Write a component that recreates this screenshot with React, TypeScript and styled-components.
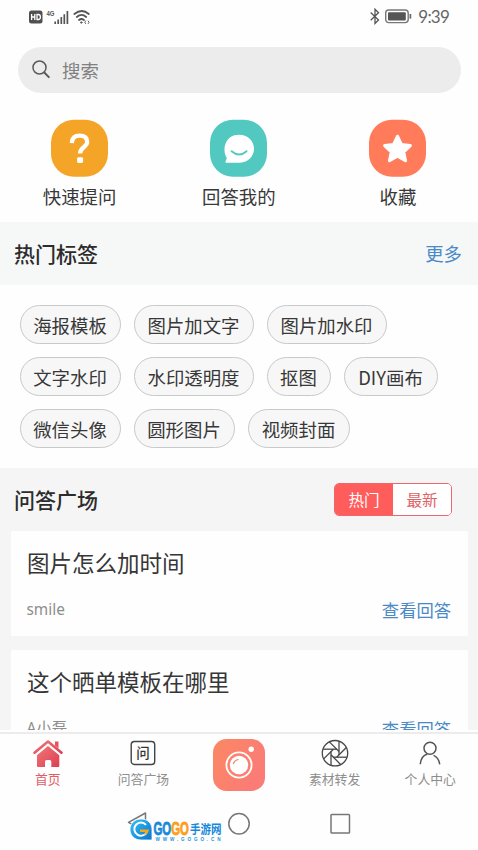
import React from "react";
import styled, { createGlobalStyle } from "styled-components";

const GlobalStyle = createGlobalStyle`
  * { box-sizing: border-box; }
  body {
    margin: 0;
    background: #fefefe;
    font-family: "Noto Sans", "Noto Sans CJK SC", sans-serif;
    color: #383838;
  }
`;

const Screen = styled.div`
  width: 478px;
  height: 850px;
  display: flex;
  flex-direction: column;
  overflow: hidden;
  background: #fefefe;
`;

const StatusBar = styled.header`
  height: 47px;
  flex: none;
  padding: 0 29px;
  display: flex;
  justify-content: space-between;
  align-items: flex-start;
`;

const StatusGroup = styled.div<{ $gap: number }>`
  display: flex;
  height: 33px;
  align-items: center;
  gap: ${(p) => p.$gap}px;
`;

const Clock = styled.span`
  font: 400 17px/33px Lato, sans-serif;
  color: #666;
  letter-spacing: -0.8px;
  margin-left: 1px;
`;

const SearchBox = styled.div`
  flex: none;
  width: 443px;
  height: 46px;
  margin-left: 18px;
  padding-left: 14px;
  border-radius: 23px;
  background: #ececed;
  display: flex;
  align-items: center;
  gap: 12px;
  font: 18.4px/28px "Noto Sans CJK SC", sans-serif;
  color: #808080;
`;

const Shortcuts = styled.nav`
  flex: none;
  height: 129px;
  padding-top: 26.3px;
  display: grid;
  grid-template-columns: repeat(3, 159.2px);
`;

const Shortcut = styled.div`
  display: flex;
  flex-direction: column;
  align-items: center;
  font: 18.4px/28px "Noto Sans CJK SC", sans-serif;
  gap: 5px;
`;

const SectionBar = styled.div`
  flex: none;
  height: 63px;
  padding: 0 16px 2px 14px;
  display: flex;
  align-items: center;
  justify-content: space-between;
  background: #f6f7f7;
`;

const SectionTitle = styled.h2`
  margin: 0;
  font: 500 21px/30px "Noto Sans CJK SC", sans-serif;
  color: #2c2c2c;
`;

const BlueLink = styled.span<{ $size: number }>`
  font: ${(p) => p.$size}px/26px "Noto Sans CJK SC", sans-serif;
  color: #4b8ac6;
`;

const TagArea = styled.div`
  flex: none;
  height: 183px;
  padding: 20px 0 0 20px;
  display: flex;
  flex-direction: column;
  gap: 13px;
`;

const TagRow = styled.div`
  display: flex;
  gap: 13px;
`;

const Tag = styled.span<{ $width: number }>`
  width: ${(p) => p.$width}px;
  height: 39px;
  border: 1px solid #c8c9c9;
  border-radius: 20px;
  background: #f7f7f7;
  display: flex;
  align-items: center;
  justify-content: center;
  padding: 0 1px 0 0;
  white-space: nowrap;
  font: 18.4px/28px "Noto Sans CJK SC", sans-serif;
`;

const Feed = styled.section`
  height: 262px;
  flex: none;
  overflow: hidden;
  background: #f5f5f5;
`;

const FeedHeader = styled.div`
  height: 63px;
  padding: 0 26px 1px 14px;
  display: flex;
  justify-content: space-between;
  align-items: center;
`;

const Segmented = styled.div`
  width: 118px;
  height: 33px;
  border: 1.5px solid #e8686b;
  border-radius: 5px;
  overflow: hidden;
  display: flex;
`;

const Segment = styled.span<{ $active?: boolean }>`
  flex: 1;
  text-align: center;
  font: 15.6px/30px "Noto Sans CJK SC", sans-serif;
  background: ${(p) => (p.$active ? "#ff5c5c" : "#fff")};
  color: ${(p) => (p.$active ? "#fff" : "#e06266")};
`;

const Card = styled.article`
  width: 457px;
  height: 105px;
  margin: 0 0 14px 11px;
  padding: 14px 17px 0 16px;
  border-radius: 2px;
  background: #fefefe;
`;

const Question = styled.h3`
  margin: 0;
  font: 400 22.5px/34px "Noto Sans CJK SC", sans-serif;
  color: #363636;
`;

const CardFooter = styled.div`
  margin-top: 18px;
  display: flex;
  justify-content: space-between;
  align-items: center;
`;

const Author = styled.span`
  margin-left: -0.5px;
  font: 15.4px/24px "Noto Sans", "Noto Sans CJK SC", sans-serif;
  color: #8d8d8d;
`;

const TabBar = styled.nav`
  flex: none;
  height: 69px;
  margin-top: 2px;
  border-top: 2px solid #ececec;
  display: grid;
  grid-template-columns: repeat(5, 95.6px);
`;

const Tab = styled.div<{ $active?: boolean; $top?: number }>`
  display: flex;
  flex-direction: column;
  align-items: center;
  padding-top: ${(p) => p.$top ?? 4}px;
  font: 12.8px/20px "Noto Sans CJK SC", sans-serif;
  color: ${(p) => (p.$active ? "#e45c68" : "#8e8e8e")};
  gap: 1px;
`;

const SystemBar = styled.footer`
  position: relative;
  flex: none;
  height: 49px;
  display: flex;
  padding: 9px 0 0 126px;
`;

const SystemKey = styled.svg<{ $gap?: number }>`
  width: 24px;
  height: 26px;
  flex: none;
  margin-left: ${(p) => p.$gap ?? 0}px;
`;

const Watermark = styled.svg`
  position: absolute;
  left: 128px;
  top: 15px;
  overflow: visible;
`;

const HdIcon = () => (
  <svg width="14" height="14" viewBox="0 0 14 14">
    <rect x="0" y="0.5" width="13.5" height="13" rx="2.5" fill="#505050" />
    <g stroke="#fff" strokeWidth="1.3" fill="none">
      <path d="M2.6 4v6M5.8 4v6M2.6 7h3.2" />
      <path d="M8 4.5h1.400q2 0 2 2.500t-2 2.500H8z" />
    </g>
  </svg>
);

const SignalIcon = () => (
  <svg width="24" height="18" viewBox="0 0 24 18">
    <text x="0.5" y="7.600" fontSize="7.500" fontWeight="700" textLength="8" lengthAdjust="spacingAndGlyphs" fontFamily="Liberation Sans" fill="#555">4G</text>
    <path d="M9.200 13.600V16M12.200 11.500V16M15.300 9V16M18.300 6.300V16M21.400 3V16" stroke="#555" strokeWidth="1.700" />
  </svg>
);

const WifiIcon = () => (
  <svg width="18" height="18" viewBox="0 0 18 18" fill="none" stroke="#555" strokeWidth="1.700" strokeLinecap="round">
    <path d="M1.300 6Q9 0 15.800 6M3.800 9q4.700-4.200 9.400 0M6 12q2.500-2 5 0" />
    <circle cx="8.300" cy="14.500" r=".8" fill="#555" strokeWidth=".7" />
    <path d="m12.600 13-.8 1.300.8 1.300M15.200 13l.8 1.300-.8 1.300" strokeWidth=".9" />
  </svg>
);

const BluetoothIcon = () => (
  <svg width="10" height="17" viewBox="0 0 10 17" fill="none" stroke="#555" strokeWidth="1.300">
    <path d="M.7 4.500 8.500 12 5 15.500V1.200l3.500 3.500L.7 12.300" />
  </svg>
);

const BatteryIcon = () => (
  <svg width="27" height="15" viewBox="0 0 27 15">
    <rect x=".7" y="1" width="22.500" height="12.600" rx="3" fill="none" stroke="#777" strokeWidth="1.400" />
    <rect x="3" y="3.200" width="17.800" height="8.200" rx="1" fill="#555" />
    <path d="M25.400 5v4.600" stroke="#666" strokeWidth="1.700" />
  </svg>
);

const SearchIcon = () => (
  <svg width="18" height="20" viewBox="0 0 18 20" fill="none" stroke="#5b5b5b">
    <circle cx="7.500" cy="7.500" r="6.500" strokeWidth="1.500" />
    <path d="m12.300 12.500 4.500 4.600" strokeWidth="2" strokeLinecap="round" />
  </svg>
);

const Squircle = ({ color, children }: { color: string; children: React.ReactNode }) => (
  <svg width="57" height="58" viewBox="0 -0.7 57 58">
    <rect width="57" height="57" rx="23" fill={color} />
    {children}
  </svg>
);

const HomeIcon = () => (
  <svg width="32" height="30" viewBox="0 0 32 30">
    <defs>
      <linearGradient id="home" x2="1" y2="1">
        <stop stopColor="#f37676" />
        <stop offset="1" stopColor="#dc3f53" />
      </linearGradient>
    </defs>
    <path d="M2.500 14.700 16 3.500l13.500 11.200" fill="none" stroke="url(#home)" strokeWidth="2.600" strokeLinecap="round" strokeLinejoin="round" />
    <path d="M23 3.500h3.500v7L23 7.500z" fill="#e4525f" />
    <path d="m16 8 11.300 9.300V28q0 1-1 1h-7v-5.500q0-1.500-1.500-1.500h-3.300q-1.500 0-1.500 1.500V29H6q-1 0-1-1V17.300z" fill="url(#home)" />
  </svg>
);

const AskIcon = () => (
  <svg width="26" height="30" viewBox="0 0 26 30">
    <rect x="1.200" y="3.500" width="23.500" height="23" rx="3.200" fill="none" stroke="#444" strokeWidth="1.400" />
    <text x="13" y="20" textAnchor="middle" fontSize="13.500" fontWeight="500" fontFamily="Noto Sans CJK SC" fill="#333">问</text>
  </svg>
);

const blades = Array.from({ length: 8 }, (_, i) => i * 45);

const ApertureIcon = () => (
  <svg width="28" height="30" viewBox="0 0 28 30" fill="none" stroke="#484848" strokeWidth="1.300">
    <circle cx="14" cy="15.200" r="12.700" />
    {blades.map((angle) => (
      <path key={angle} d="M15.700 11.200H2" transform={`rotate(${angle} 14 15.200)`} />
    ))}
  </svg>
);

const PersonIcon = () => (
  <svg width="26" height="30" viewBox="0 0 26 30" fill="none" stroke="#555" strokeWidth="1.500">
    <circle cx="13" cy="10.200" r="6" />
    <path d="M3.300 26.300C3.800 19.800 7 17 10.200 16.200M16.600 17.400c3.500 1.500 5.500 4.600 6.100 8.900" />
  </svg>
);

const CameraButton = () => (
  <svg width="52" height="52" viewBox="0 0 52 52">
    <defs>
      <linearGradient id="camera" x2="1" y2=".6">
        <stop stopColor="#fb8863" />
        <stop offset="1" stopColor="#fb7b77" />
      </linearGradient>
    </defs>
    <rect width="52" height="52" rx="13.500" fill="url(#camera)" />
    <circle cx="26" cy="26" r="12.600" fill="none" stroke="#fff" strokeWidth="1.800" />
    <circle cx="26" cy="26" r="9.200" fill="#fff" />
    <path d="M20.400 24.700q1.200-3.500 4.700-4.200" fill="none" stroke="#e98b78" strokeWidth="1.200" strokeLinecap="round" />
    <circle cx="38.200" cy="10.200" r="2.700" fill="#fff" />
  </svg>
);

const tagRows: [string, number][][] = [
  [["海报模板", 101], ["图片加文字", 120], ["图片加水印", 120]],
  [["文字水印", 101], ["水印透明度", 120], ["抠图", 64], ["DIY画布", 94]],
  [["微信头像", 101], ["圆形图片", 101], ["视频封面", 102]],
];

const questions = [
  { title: "图片怎么加时间", author: "smile" },
  { title: "这个晒单模板在哪里", author: "A小磊" },
];

export default function App() {
  return (
    <>
      <GlobalStyle />
      <Screen>
        <StatusBar>
          <StatusGroup $gap={3}>
            <HdIcon />
            <SignalIcon />
            <WifiIcon />
          </StatusGroup>
          <StatusGroup $gap={5}>
            <BluetoothIcon />
            <BatteryIcon />
            <Clock>9:39</Clock>
          </StatusGroup>
        </StatusBar>

        <SearchBox>
          <SearchIcon />
          搜索
        </SearchBox>

        <Shortcuts>
          <Shortcut>
            <Squircle color="#f4a527">
              <path d="M20.800 23.400Q21.200 16 28.700 16t7.500 6.400c0 5-7.200 5-7.200 11.500" fill="none" stroke="#fff" strokeWidth="4.300" strokeLinejoin="round" />
              <rect x="26.100" y="37.500" width="6" height="5.800" rx="1.400" fill="#fff" />
            </Squircle>
            快速提问
          </Shortcut>
          <Shortcut>
            <Squircle color="#51c9c1">
              <path d="M29 15c8.500 0 15 6 15 14s-6.500 14-15 14H16.200q-1.400 0-.6-1.400l1.200-3.400C11.500 29 15.500 15 29 15Z" fill="#fff" />
              <path d="M21.600 31.500q7.500 6.500 15 0" fill="none" stroke="#51c9c1" strokeWidth="1.800" strokeLinecap="round" />
            </Squircle>
            回答我的
          </Shortcut>
          <Shortcut>
            <Squircle color="#ff7b59">
              <path d="m28.500 16.500 3.900 8.200 9 1.200-6.600 6.200 1.700 8.900-8-4.400-8 4.400 1.700-8.900-6.600-6.200 9-1.200z" fill="#fff" stroke="#fff" strokeWidth="3" strokeLinejoin="round" />
            </Squircle>
            收藏
          </Shortcut>
        </Shortcuts>

        <SectionBar>
          <SectionTitle>热门标签</SectionTitle>
          <BlueLink $size={18.4}>更多</BlueLink>
        </SectionBar>

        <TagArea>
          {tagRows.map((row, i) => (
            <TagRow key={i}>
              {row.map(([label, width]) => (
                <Tag key={label} $width={width}>{label}</Tag>
              ))}
            </TagRow>
          ))}
        </TagArea>

        <Feed>
          <FeedHeader>
            <SectionTitle>问答广场</SectionTitle>
            <Segmented>
              <Segment $active>热门</Segment>
              <Segment>最新</Segment>
            </Segmented>
          </FeedHeader>
          {questions.map((q) => (
            <Card key={q.title}>
              <Question>{q.title}</Question>
              <CardFooter>
                <Author>{q.author}</Author>
                <BlueLink $size={17.3}>查看回答</BlueLink>
              </CardFooter>
            </Card>
          ))}
        </Feed>

        <TabBar>
          <Tab $active><HomeIcon />首页</Tab>
          <Tab><AskIcon />问答广场</Tab>
          <Tab $top={5}><CameraButton /></Tab>
          <Tab><ApertureIcon />素材转发</Tab>
          <Tab><PersonIcon />个人中心</Tab>
        </TabBar>

        <SystemBar>
          <SystemKey viewBox="0 0 24 26" fill="none" stroke="#777" strokeWidth="1.500">
            <path d="M19.500 3v18.500L2.500 12.300z" strokeLinejoin="round" />
          </SystemKey>
          <SystemKey $gap={77} viewBox="0 0 24 26" fill="none" stroke="#777" strokeWidth="1.500">
            <circle cx="12" cy="13.700" r="10.200" />
          </SystemKey>
          <SystemKey $gap={77} viewBox="0 0 24 26" fill="none" stroke="#777" strokeWidth="1.500">
            <rect x="3" y="4.500" width="18.500" height="18.500" rx=".8" />
          </SystemKey>
          <Watermark width="96" height="28" viewBox="0 0 96 28">
            <defs>
              <linearGradient id="mark" x2="1" y2="1">
                <stop stopColor="#35c1f6" />
                <stop offset="1" stopColor="#0875d0" />
              </linearGradient>
            </defs>
            <path d="M13 3c7 0 11 4.500 11 10.500V24H13C6.500 24 2 19.500 2 13.500S6.500 3 13 3Z" fill="url(#mark)" stroke="#fff" strokeWidth=".8" />
            <path d="M18 8.800a6.600 6.600 0 1 0 1 7" fill="none" stroke="#fff" strokeWidth="2" />
            <path d="M12 13.500h9q-.5 5-6 5.500 3-1.500 2.500-3H12z" fill="#f9a51a" />
            <text x="25.500" y="18.500" textLength="35.500" lengthAdjust="spacingAndGlyphs" fontFamily="Liberation Sans" fontWeight="700" fontSize="18" strokeWidth=".8">
              <tspan fill="#1689da" stroke="#1689da">GO</tspan><tspan fill="#ff9d16" stroke="#ff9d16">GO</tspan>
            </text>
            <text x="62" y="17.800" textLength="31.500" lengthAdjust="spacingAndGlyphs" fontFamily="Noto Sans CJK SC" fontWeight="700" fontSize="12.500" fill="#1689da">手游网</text>
            <text x="27.500" y="24.800" textLength="65" fontFamily="Liberation Sans" fontWeight="700" fontSize="4.600" fill="#2592da">WWW.GOGO.CN</text>
          </Watermark>
        </SystemBar>
      </Screen>
    </>
  );
}
